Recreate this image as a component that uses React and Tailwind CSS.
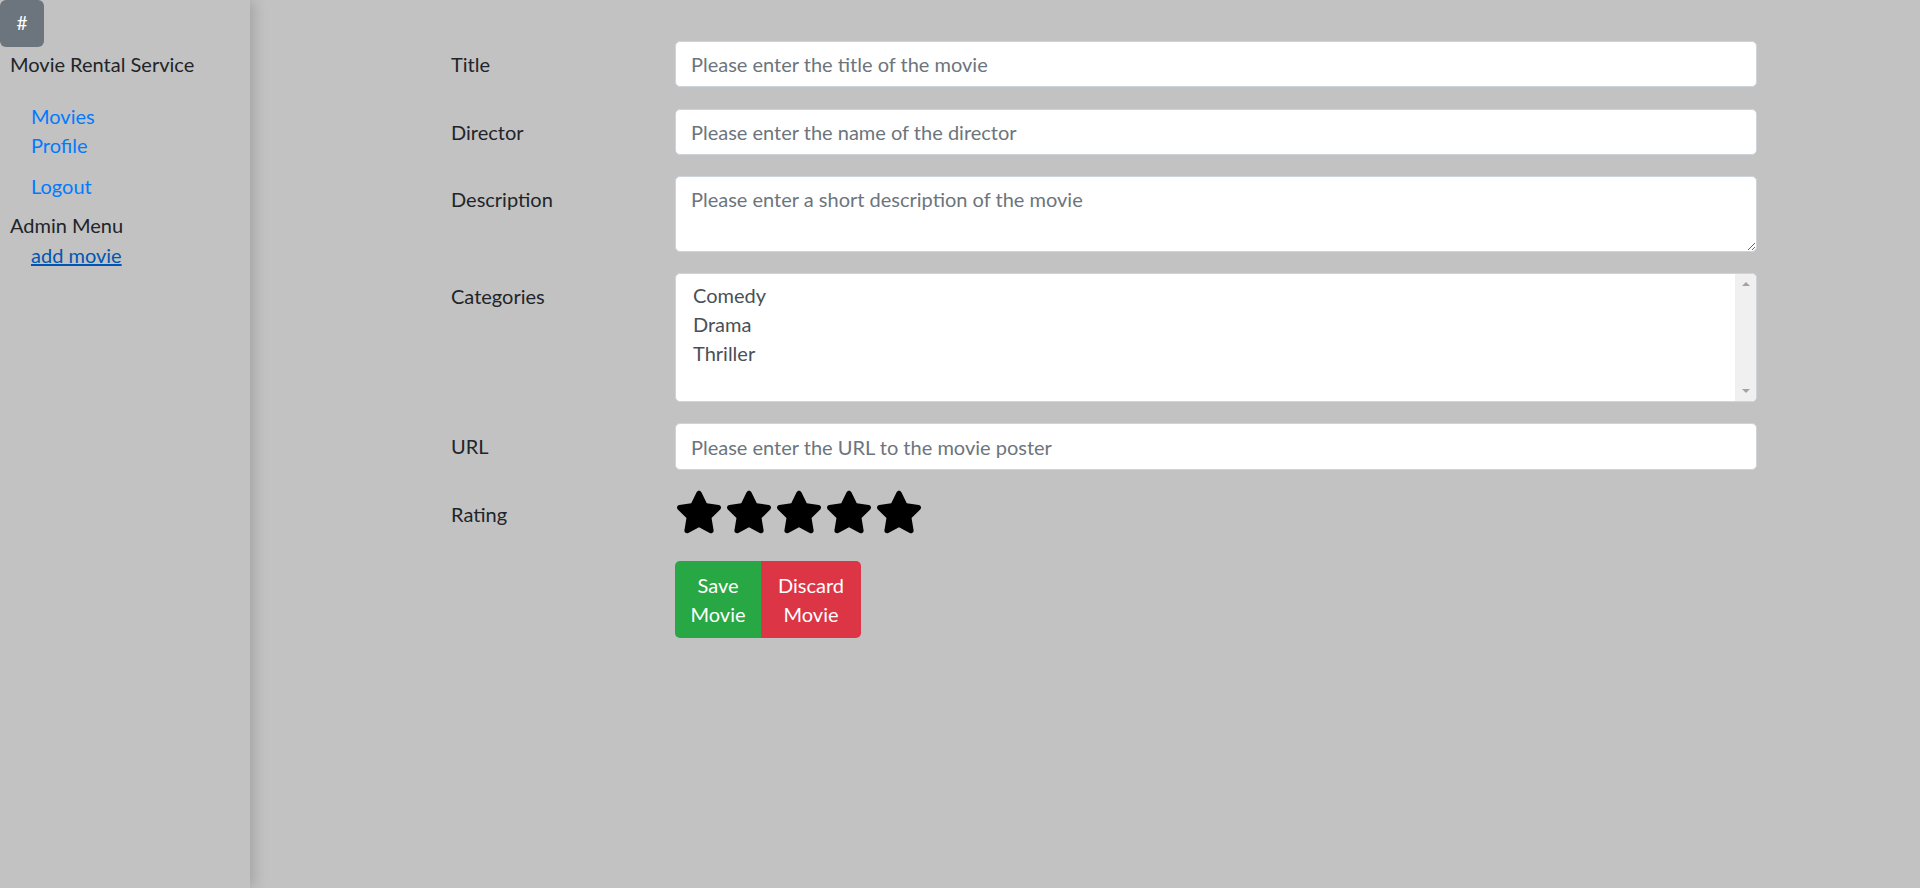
import React from 'react';
import { FaStar } from 'react-icons/fa6';

const font = { fontFamily: 'Lato, "Noto Sans", sans-serif' };

const Sidebar = () => (
  <aside className="w-[250px] h-[888px] shrink-0 bg-[#c2c2c2] shadow-[3px_0_14px_rgba(0,0,0,0.18)] relative z-10">
    <button className="w-[44px] h-[47px] bg-[#6c757d] text-white text-[19px] rounded-[6px] flex items-center justify-center">
      #
    </button>
    <div className="pl-[10px] pt-[3px] text-[20px] leading-[29px] text-[#212529]">Movie Rental Service</div>
    <ul className="pl-[31px] mt-[23px] text-[20px] leading-[29px]">
      <li><a className="text-[#007bff]">Movies</a></li>
      <li><a className="text-[#007bff]">Profile</a></li>
      <li className="mt-[12px]"><a className="text-[#007bff]">Logout</a></li>
    </ul>
    <div className="pl-[10px] mt-[10px] text-[20px] leading-[29px] text-[#212529]">Admin Menu</div>
    <div className="pl-[31px] pt-[1px] text-[20px] leading-[29px]">
      <a className="text-[#0056b3] underline">add movie</a>
    </div>
  </aside>
);

const Row = ({ label, className = '', labelPad = 'pt-[9px]', children }) => (
  <div className={`flex ${className}`}>
    <label className={`w-[224px] shrink-0 ${labelPad} text-[20px] leading-[29px] text-[#212529]`}>{label}</label>
    <div className="w-[1082px]">{children}</div>
  </div>
);

const inputCls =
  'w-full bg-white border border-[#ced4da] rounded-[5px] px-[15px] text-[20px] text-[#495057] placeholder:text-[#6c757d] outline-none';

const App = () => {
  const categories = ['Comedy', 'Drama', 'Thriller'];

  return (
    <div className="flex w-[1920px] h-[888px] bg-[#c2c2c2] overflow-hidden" style={font}>
      <Sidebar />
      <main className="flex-1 pl-[201px] pt-[41px]">
        <Row label="Title">
          <input className={`${inputCls} h-[46px]`} placeholder="Please enter the title of the movie" />
        </Row>
        <Row label="Director" className="mt-[22px]">
          <input className={`${inputCls} h-[46px]`} placeholder="Please enter the name of the director" />
        </Row>
        <Row label="Description" className="mt-[21px]">
          <textarea
            className={`${inputCls} h-[76px] pt-[8px] pb-[4px] leading-[29px] block`}
            placeholder="Please enter a short description of the movie"
          />
        </Row>
        <Row label="Categories" className="mt-[21px]">
          <div className="h-[129px] bg-white border border-[#ced4da] rounded-[5px] flex overflow-hidden">
            <div className="flex-1 pl-[15px] pt-[7px] text-[20px] leading-[29px] text-[#495057]">
              {categories.map(c => (
                <div key={c} className="px-[2px]">{c}</div>
              ))}
            </div>
            <div className="w-[21px] bg-[#f0f0f0] flex flex-col items-center justify-between py-[8px]">
              <span className="w-0 h-0 border-l-[4px] border-r-[4px] border-b-[4px] border-l-transparent border-r-transparent border-b-[#a3a3a3]" />
              <span className="w-0 h-0 border-l-[4px] border-r-[4px] border-t-[4px] border-l-transparent border-r-transparent border-t-[#a3a3a3]" />
            </div>
          </div>
        </Row>
        <Row label="URL" className="mt-[21px]">
          <input className={`${inputCls} h-[47px]`} placeholder="Please enter the URL to the movie poster" />
        </Row>
        <Row label="Rating" className="mt-[18px]" labelPad="pt-[12px]">
          <div className="flex gap-[2px] h-[48px]">
            {[1, 2, 3, 4, 5].map(i => (
              <FaStar key={i} className="w-[48px] h-[48px] text-black" />
            ))}
          </div>
        </Row>
        <div className="flex mt-[25px]">
          <div className="w-[224px] shrink-0" />
          <div className="flex text-white text-[20px] leading-[29px] text-center">
            <button className="w-[86px] h-[77px] bg-[#28a745] rounded-l-[5px]">Save<br />Movie</button>
            <button className="w-[100px] h-[77px] bg-[#dc3545] rounded-r-[5px]">Discard<br />Movie</button>
          </div>
        </div>
      </main>
    </div>
  );
};

export default App;
